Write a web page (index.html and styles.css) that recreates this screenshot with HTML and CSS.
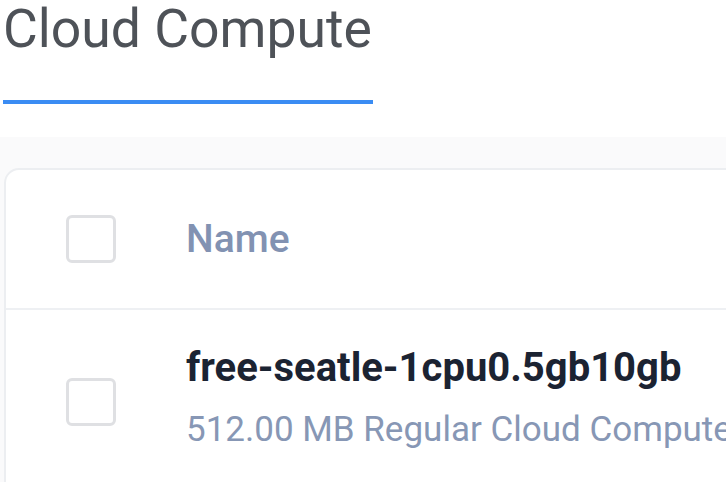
FILE: index.html
```html
<!DOCTYPE html>
<html lang="en">
<head>
<meta charset="utf-8">
<title>Cloud Compute</title>
<link rel="stylesheet" href="styles.css">
</head>
<body>
<div class="page">
  <header class="top">
    <nav class="tabs">
      <div class="tab">Cloud Compute</div>
    </nav>
  </header>
  <main class="content">
    <section class="card">
      <div class="row head">
        <span class="check"></span>
        <span class="col-name">Name</span>
      </div>
      <div class="row item">
        <span class="check"></span>
        <div class="info">
          <div class="title">free-seatle-1cpu0.5gb10gb</div>
          <div class="sub">512.00 MB Regular Cloud Compute</div>
        </div>
      </div>
    </section>
  </main>
</div>
</body>
</html>
```

FILE: styles.css
```css
html, body {
  margin: 0;
  padding: 0;
  background: #ffffff;
  overflow: hidden;
}
.page {
  width: 726px;
  height: 482px;
  overflow: hidden;
  font-family: Roboto, "Liberation Sans", Arial, sans-serif;
}
.top {
  height: 137px;
  background: #ffffff;
  padding-left: 3px;
  box-sizing: border-box;
}
.tabs {
  display: flex;
  padding-top: 1px;
}
.tab {
  font-size: 53.5px;
  line-height: 56px;
  color: #4e5258;
  padding-bottom: 43px;
  border-bottom: 4px solid #3a8cf3;
  padding-right: 1px;
  white-space: nowrap;
}
.content {
  background: #fafafb;
  padding: 31px 0 0 4px;
  height: 345px;
  box-sizing: border-box;
}
.card {
  width: 900px;
  height: 400px;
  background: #ffffff;
  border: 2px solid #eceef1;
  border-radius: 15px;
  box-sizing: border-box;
}
.row {
  display: flex;
  align-items: center;
  padding-left: 60px;
  gap: 70px;
}
.head {
  height: 138px;
  border-bottom: 2px solid #eef0f3;
}
.check {
  width: 50px;
  height: 48px;
  border: 3px solid #dfe0e3;
  border-radius: 6px;
  box-sizing: border-box;
  flex: none;
}
.col-name {
  font-size: 39px;
  line-height: 1.2;
  font-weight: 500;
  color: #8292b2;
}
.item {
  align-items: flex-start;
  padding-top: 34px;
}
.item .check {
  margin-top: 34px;
}
.info {
  display: flex;
  flex-direction: column;
  gap: 17px;
}
.title {
  font-size: 40px;
  font-weight: 700;
  line-height: 1.2;
  color: #1b2332;
  white-space: nowrap;
}
.sub {
  font-size: 35px;
  line-height: 1.2;
  color: #8797b5;
  white-space: nowrap;
}
```
